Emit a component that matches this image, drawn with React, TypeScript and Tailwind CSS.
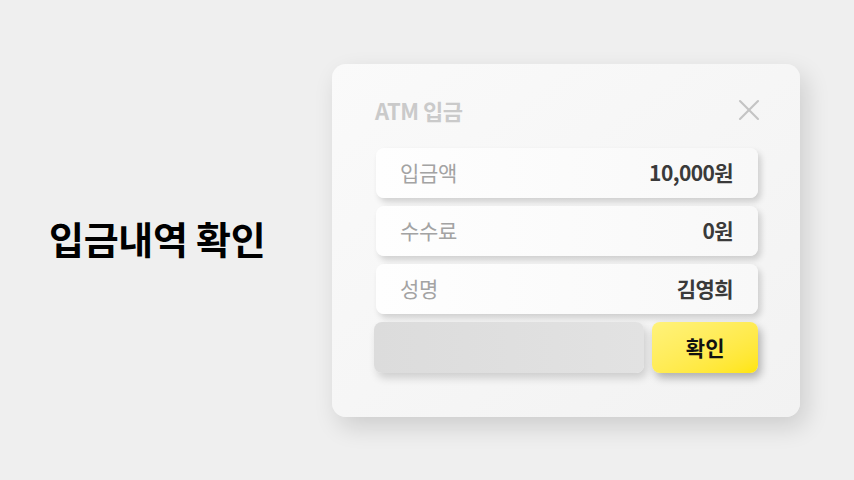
import { X } from "lucide-react"

const rows = [
  { label: "입금액", value: "10,000원" },
  { label: "수수료", value: "0원" },
  { label: "성명", value: "김영희" },
]

export default function App() {
  return (
    <div
      className="w-[854px] h-[480px] bg-[#efefef] flex items-center overflow-hidden"
      style={{ fontFamily: '"Noto Sans CJK KR", "Noto Sans", sans-serif' }}
    >
      <div className="w-[332px] pl-[49px] pb-[4px]">
        <h1 className="text-[38px] font-bold text-black tracking-[-0.3px] leading-none">입금내역 확인</h1>
      </div>

      <div className="w-[468px] h-[353px] mt-[1px] rounded-[14px] bg-gradient-to-br from-[#fafafa] to-[#f2f2f2] shadow-[6px_10px_24px_rgba(0,0,0,0.14)] px-[42px] pt-[26px] pb-[44px] flex flex-col">
        <div className="flex items-center justify-between pl-[1px] h-[40px] mb-[18px]">
          <span className="text-[22px] font-semibold text-[#cacaca] tracking-[-0.5px]">ATM 입금</span>
          <X className="w-[36px] h-[36px] text-[#c4c4c4] mr-[-9px]" strokeWidth={1.4} />
        </div>

        <div className="flex flex-col gap-[8px] pl-[2px]">
          {rows.map((row) => (
            <div
              key={row.label}
              className="h-[50px] rounded-[8px] bg-gradient-to-r from-[#fefefe] to-[#f8f8f8] shadow-[3px_4px_6px_rgba(0,0,0,0.16)] flex items-center justify-between pl-[24px] pr-[25px]"
            >
              <span className="text-[21px] text-[#a3a3a3] tracking-[-0.3px]">{row.label}</span>
              <span className="text-[21px] font-semibold text-[#3a3a3a] tracking-[-0.6px]">{row.value}</span>
            </div>
          ))}

          <div className="flex gap-[8px] ml-[-2px]">
            <div className="w-[271px] h-[51px] rounded-[8px] bg-gradient-to-r from-[#dcdcdc] to-[#e2e2e2] shadow-[3px_5px_8px_rgba(0,0,0,0.16)]" />
            <button className="w-[106px] h-[51px] rounded-[8px] bg-gradient-to-br from-[#fff27a] to-[#ffe500] shadow-[3px_5px_8px_rgba(0,0,0,0.28)] flex items-center justify-center text-[21px] font-bold text-[#111111]">
              확인
            </button>
          </div>
        </div>
      </div>
    </div>
  )
}
